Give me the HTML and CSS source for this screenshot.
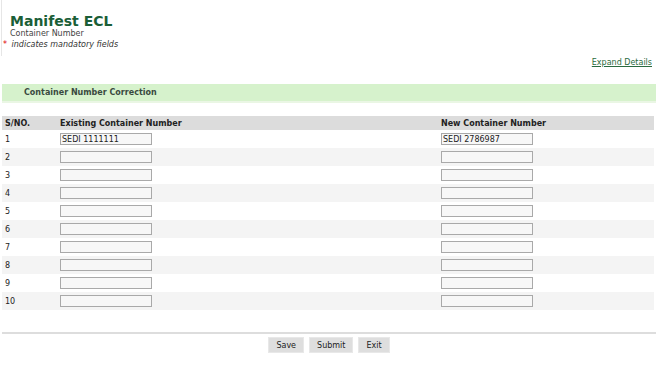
FILE: index.html
```html
<!DOCTYPE html>
<html>
<head>
  <title>Manifest ECL</title>
  <link rel="stylesheet" href="styles.css">
</head>
<body>

<div id="cabecera">
  <h1>Manifest ECL</h1>
  <div class="subtitulo">Container Number</div>
  <div class="obligatorio"><span class="asterisco">*</span> indicates mandatory fields</div>
</div>

<div id="expandir"><a href="#">Expand Details</a></div>

<div id="barraSeccion">Container Number Correction</div>

<table id="tablaContenedores">
  <tr class="encabezado">
    <th class="colNum">S/NO.</th>
    <th class="colExistente">Existing Container Number</th>
    <th>New Container Number</th>
  </tr>
  <tr><td>1</td><td><input type="text" value="SEDI 1111111"></td><td><input type="text" value="SEDI 2786987"></td></tr>
  <tr><td>2</td><td><input type="text"></td><td><input type="text"></td></tr>
  <tr><td>3</td><td><input type="text"></td><td><input type="text"></td></tr>
  <tr><td>4</td><td><input type="text"></td><td><input type="text"></td></tr>
  <tr><td>5</td><td><input type="text"></td><td><input type="text"></td></tr>
  <tr><td>6</td><td><input type="text"></td><td><input type="text"></td></tr>
  <tr><td>7</td><td><input type="text"></td><td><input type="text"></td></tr>
  <tr><td>8</td><td><input type="text"></td><td><input type="text"></td></tr>
  <tr><td>9</td><td><input type="text"></td><td><input type="text"></td></tr>
  <tr><td>10</td><td><input type="text"></td><td><input type="text"></td></tr>
</table>

<div id="separador"></div>

<div id="botones">
  <button>Save</button>
  <button>Submit</button>
  <button>Exit</button>
</div>

</body>
</html>
```

FILE: styles.css
```css
body, html {
  margin: 0;
  background-color: white;
  font-family: "DejaVu Sans", Verdana, sans-serif;
  font-size: 8px;
  color: #333;
}

#cabecera {
  border-left: 1px solid #e6e6e6;
  margin-left: 1px;
  padding: 13px 0 0 8px;
  height: 43px;
}

#cabecera h1 {
  margin: 0;
  font-size: 14px;
  line-height: 16px;
  color: #1b5e37;
}

.subtitulo {
  line-height: 10px;
  color: #444;
}

.obligatorio {
  font-style: italic;
  line-height: 12px;
  margin-left: -7px;
  color: #333;
}

.asterisco {
  color: #e00000;
  font-style: normal;
  margin-right: 2px;
}

#expandir {
  text-align: right;
  padding: 1px 6px 0 0;
  line-height: 12px;
}

#expandir a {
  color: #2a6b40;
  text-decoration: underline;
}

#barraSeccion {
  margin: 15px 2px 0 2px;
  background-color: #d6f2cc;
  border-bottom: 2px solid #eaf6e4;
  height: 17px;
  line-height: 18px;
  padding-left: 22px;
  font-weight: bold;
  color: #3a4a40;
}

#tablaContenedores {
  margin: 13px 3px 0 2px;
  width: 652px;
  border-collapse: collapse;
}

#tablaContenedores th {
  background-color: #dcdcdc;
  text-align: left;
  height: 14px;
  padding: 0 3px;
  font-weight: bold;
  color: #222;
}

#tablaContenedores td {
  height: 18px;
  padding: 0 3px;
  color: #222;
}

#tablaContenedores tr:nth-child(odd) td {
  background-color: #f4f4f4;
}

.colNum {
  width: 49px;
}

.colExistente {
  width: 375px;
}

#tablaContenedores input {
  box-sizing: border-box;
  width: 92px;
  height: 12px;
  margin: 0;
  padding: 0 1px;
  border: 1px solid #a9a9a9;
  background-color: #f7f7f7;
  font-family: "DejaVu Sans", Verdana, sans-serif;
  font-size: 8px;
  color: #222;
  display: block;
}

#separador {
  margin: 22px 2px 0 2px;
  border-top: 2px solid #dddddd;
}

#botones {
  display: flex;
  justify-content: center;
  gap: 5px;
  padding-top: 3px;
}

#botones button {
  background-color: #dedede;
  border: 1px solid #e8e8e8;
  height: 16px;
  padding: 0 7px;
  font-family: "DejaVu Sans", Verdana, sans-serif;
  font-size: 8px;
  color: #222;
}
```
